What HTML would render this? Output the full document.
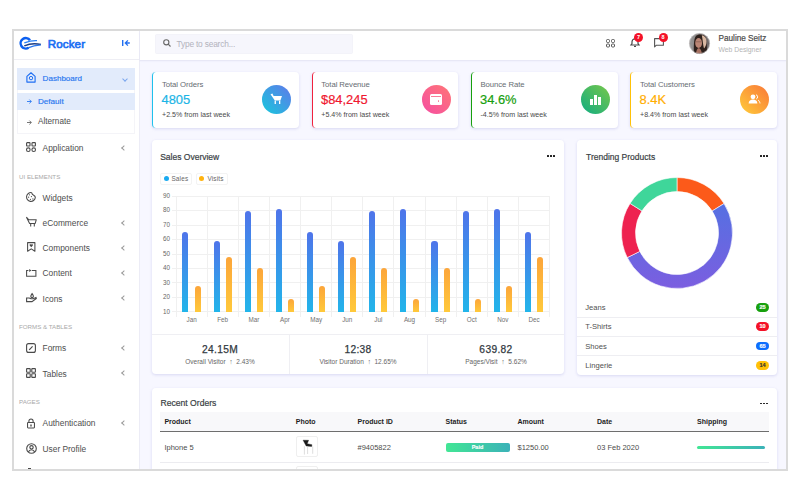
<!DOCTYPE html>
<html><head><meta charset="utf-8">
<style>
*{box-sizing:border-box;margin:0;padding:0}
html,body{width:800px;height:500px;overflow:hidden;background:#fff}
body{position:relative;font-family:"Liberation Sans",sans-serif;color:#4c5258}
.a{position:absolute}
.t{position:absolute;white-space:nowrap;line-height:1}
#frame{left:12px;top:29px;width:776px;height:442px;border:2px solid #dadada}
#main{left:140px;top:60px;width:646px;height:409px;background:#f7f7ff}
#side{left:14px;top:31px;width:126px;height:438px;background:#fff;border-right:1px solid #ececf6}
#sidehead{left:14px;top:31px;width:125px;height:29px;border-bottom:1px solid #eeeef4}
#head{left:140px;top:31px;width:646px;height:29.5px;background:#fff;border-bottom:1px solid #e8e8f6;box-shadow:0 0.5px 1.5px rgba(220,220,245,.6)}
.card{position:absolute;background:#fff;border-radius:4px;box-shadow:0 1px 3px rgba(206,206,238,.75)}
.menu{font-size:8.35px;color:#4e4e4e}
.med{-webkit-text-stroke:0.18px currentColor}
.lbl{font-size:6.2px;color:#a9a9a9;letter-spacing:0}
.chev{position:absolute;left:122px;width:4px;height:4px;border-left:0.9px solid #9a9a9a;border-bottom:0.9px solid #9a9a9a;transform:rotate(45deg)}
svg{position:absolute;overflow:visible}
.stit{font-size:7.75px;letter-spacing:-0.08px;color:#666c72}
.sval{font-size:12.9px;-webkit-text-stroke:0.2px currentColor}
.ssub{font-size:7.1px;color:#4a4a4a}
.ctitle{font-size:8.5px;color:#3a3f45;-webkit-text-stroke:0.2px #3a3f45;letter-spacing:0}
.dots{position:absolute;width:1.9px;height:1.9px;margin:0.1px 0 0 0.2px;background:#222;box-shadow:3px 0 0 #222,6px 0 0 #222;border-radius:0.3px}
.ylab{position:absolute;font-size:6.3px;color:#666;text-align:right;width:20px;line-height:1}
.mlab{position:absolute;font-size:6.3px;color:#707070;text-align:center;width:31px;line-height:1}
.bar{position:absolute;width:6.1px;border-radius:3px 3px 0 0}
.bs{background:linear-gradient(#4f74ea,#22b5ea)}
.bv{background:linear-gradient(#fca53a,#ffc93b)}
.stv{font-size:10.2px;letter-spacing:0.35px;color:#32393f;-webkit-text-stroke:0.25px #32393f;text-align:center;width:138px}
.sts{font-size:6.5px;color:#666;text-align:center;width:138px}
.li{font-size:7.6px;color:#505050;margin-top:0.7px}
.badge{position:absolute;left:756px;width:13px;height:8.5px;border-radius:4.5px;font-size:5.6px;font-weight:bold;color:#fff;text-align:center;line-height:8.5px;-webkit-text-stroke:0.15px currentColor}
.th{font-size:7px;font-weight:bold;color:#1e1e1e}
.td{font-size:7.5px;color:#4c4c4c}
</style></head><body>
<div id="clip" class="a" style="left:0;top:0;width:786px;height:469px;overflow:hidden">
<div id="main" class="a"></div>
<div id="side" class="a"></div>
<div id="sidehead" class="a"></div>
<div id="head" class="a"></div>

<!-- logo -->
<svg style="left:16px;top:33px" width="30" height="20" viewBox="0 0 30 20" fill="none">
  <path d="M14 7.2 A5.2 5.2 0 1 0 12.6 14.7" stroke="#0b5ff0" stroke-width="2.5"/>
  <path d="M8.3 9.9 C12 8.6 16 7.3 21 7.7" stroke="#2a80f5" stroke-width="1.3"/>
  <path d="M8.3 12.9 C12.5 11 17.5 9.6 24.9 11.5" stroke="#1c3d84" stroke-width="1.5"/>
  <path d="M12 14.9 C16 13 20 12.1 24.8 11.9" stroke="#2a78f0" stroke-width="1.2"/>
</svg>
<div class="t" style="left:47.8px;top:38.4px;font-size:11.6px;color:#1b6ef3;-webkit-text-stroke:0.65px #1b6ef3;letter-spacing:0.1px">Rocker</div>
<!-- toggle icon -->
<svg style="left:122px;top:40px" width="9" height="6" viewBox="0 0 9 6">
  <path d="M0.7 0 V6" stroke="#2370f0" stroke-width="1.4"/>
  <path d="M7.8 3 H3.6 M5.9 0.4 L3.3 3 L5.9 5.6" stroke="#2370f0" stroke-width="1.3" fill="none"/>
</svg>

<!-- active menu -->
<div class="a" style="left:17px;top:67.5px;width:118px;height:22px;background:#e2ebfb"></div>
<div class="a" style="left:17px;top:90px;width:118px;height:44px;border:1px solid #f4f4f8;border-top:0"></div>
<div class="a" style="left:17px;top:93px;width:118px;height:17px;background:#e2ebfb"></div>
<svg style="left:26px;top:72.3px" width="10" height="11" viewBox="0 0 10 11">
  <path d="M0.9 4.4 L5 0.8 L9.1 4.4 V10.1 H0.9 Z" fill="none" stroke="#1f6ff3" stroke-width="1.15" stroke-linejoin="round"/>
  <circle cx="5" cy="6.1" r="1.7" fill="none" stroke="#1f6ff3" stroke-width="1"/>
</svg>
<div class="t menu med" style="left:42.6px;top:74.9px;font-size:8.05px;color:#2a78f0">Dashboard</div>
<div class="a" style="left:122.5px;top:77px;width:4px;height:4px;border-right:0.9px solid #7aa6ee;border-bottom:0.9px solid #7aa6ee;transform:rotate(45deg)"></div>
<svg style="left:26.5px;top:99px" width="5" height="5" viewBox="0 0 5 5" fill="none" stroke="#2a78f0" stroke-width="0.9"><path d="M0 2.5 H4.3 M2.4 0.6 L4.3 2.5 L2.4 4.4"/></svg>
<div class="t med" style="left:38px;top:97.8px;font-size:8.1px;color:#2a78f0">Default</div>
<svg style="left:26.5px;top:119.5px" width="5" height="5" viewBox="0 0 5 5" fill="none" stroke="#666" stroke-width="0.9"><path d="M0 2.5 H4.3 M2.4 0.6 L4.3 2.5 L2.4 4.4"/></svg>
<div class="t menu" style="left:38px;top:118.4px;font-size:8.2px">Alternate</div>

<!-- application -->
<svg style="left:26px;top:142px" width="10" height="10" viewBox="0 0 10 10" fill="none" stroke="#4a4a4a" stroke-width="1.1">
  <rect x="0.6" y="0.6" width="3.4" height="3.4" rx="0.6"/><rect x="6" y="0.6" width="3.4" height="3.4" rx="0.6"/>
  <circle cx="2.3" cy="7.7" r="1.8"/><circle cx="7.7" cy="7.7" r="1.8"/>
</svg>
<div class="t menu" style="left:42.6px;top:144.2px">Application</div>
<div class="chev" style="top:145.7px"></div>

<div class="t lbl" style="left:19px;top:173.5px">UI ELEMENTS</div>
<svg style="left:26px;top:192px" width="10" height="10" viewBox="0 0 10 10" fill="none" stroke="#4a4a4a" stroke-width="1.05">
  <path d="M9.3 5.6 A4.4 4.4 0 1 1 5.6 0.65 C5.9 2 6.9 3 8 3.5 C8.7 3.9 9.3 4.6 9.3 5.6Z" stroke-linejoin="round"/>
  <g fill="#4a4a4a" stroke="none"><circle cx="3.5" cy="2.8" r="0.6"/><circle cx="2.6" cy="5.2" r="0.6"/><circle cx="5.4" cy="4.6" r="0.6"/><circle cx="4.4" cy="7.3" r="0.6"/><circle cx="6.9" cy="6.9" r="0.6"/></g>
</svg>
<div class="t menu" style="left:42.6px;top:193.6px">Widgets</div>

<svg style="left:25.5px;top:216.8px" width="11" height="10" viewBox="0 0 11 10" fill="none" stroke="#4a4a4a" stroke-width="1.05">
  <path d="M0.6 0.4 L2.6 2.7 H10.3 L9.2 6.4 H3.6 Z" stroke-linejoin="round"/><path d="M4.7 6.4 V9.6 M8.3 6.4 V9.6"/>
</svg>
<div class="t menu" style="left:42.6px;top:219.0px">eCommerce</div>
<div class="chev" style="top:221px"></div>

<svg style="left:26.8px;top:242.2px" width="8.5" height="10" viewBox="0 0 8.5 10" fill="none" stroke="#4a4a4a" stroke-width="1.05">
  <path d="M0.6 0.6 H7.9 V9.3 L4.25 6.9 L0.6 9.3 Z" stroke-linejoin="round"/><path d="M4.25 5.2 L2.7 3.6 A0.9 0.9 0 0 1 4.25 2.6 A0.9 0.9 0 0 1 5.8 3.6Z" fill="#4a4a4a" stroke="none"/>
</svg>
<div class="t menu" style="left:42.6px;top:244.2px">Components</div>
<div class="chev" style="top:246px"></div>

<svg style="left:26px;top:269px" width="10.5" height="8" viewBox="0 0 10.5 8" fill="none" stroke="#4a4a4a" stroke-width="1.05">
  <path d="M2.4 1.5 H0.6 V7.3 H9.9 V1.5 H5.8"/><path d="M3.2 0 L5.4 1.5 L3.2 3 Z" fill="#4a4a4a" stroke="none"/>
</svg>
<div class="t menu" style="left:42.6px;top:269.4px">Content</div>
<div class="chev" style="top:271px"></div>

<svg style="left:25.5px;top:293px" width="11" height="10" viewBox="0 0 11 10" fill="none" stroke="#4a4a4a" stroke-width="1.1">
  <path d="M6.1 0.6 C5.1 2 4.8 2.8 4.8 3.3 A1.3 1.3 0 0 0 7.4 3.3 C7.4 2.8 7.1 2 6.1 0.6Z"/><path d="M0.6 5 H3.2 L5 5.8 H7.2 L10 4.6 L10.3 5.5 L6 8.6 H0.6Z"/>
</svg>
<div class="t menu" style="left:42.6px;top:294.6px">Icons</div>
<div class="chev" style="top:296px"></div>

<div class="t lbl" style="left:19px;top:323.6px">FORMS &amp; TABLES</div>
<svg style="left:26px;top:343px" width="10" height="10" viewBox="0 0 10 10" fill="none" stroke="#4a4a4a" stroke-width="1.1">
  <rect x="0.6" y="0.6" width="8.8" height="8.8" rx="2"/><path d="M3.2 6.8 L6.6 3.4" stroke-width="1.2"/>
</svg>
<div class="t menu" style="left:42.6px;top:344.4px">Forms</div>
<div class="chev" style="top:346px"></div>

<svg style="left:26px;top:368px" width="10" height="10" viewBox="0 0 10 10" fill="none" stroke="#4a4a4a" stroke-width="1.1">
  <rect x="0.6" y="0.6" width="3.6" height="3.6" rx="0.5"/><rect x="5.8" y="0.6" width="3.6" height="3.6" rx="0.5"/><rect x="0.6" y="5.8" width="3.6" height="3.6" rx="0.5"/><rect x="5.8" y="5.8" width="3.6" height="3.6" rx="0.5"/>
</svg>
<div class="t menu" style="left:42.6px;top:369.6px">Tables</div>
<div class="chev" style="top:371px"></div>

<div class="t lbl" style="left:19px;top:399.2px">PAGES</div>
<svg style="left:27px;top:417.8px" width="8" height="10.5" viewBox="0 0 8 10.5" fill="none" stroke="#4a4a4a" stroke-width="1.05">
  <path d="M1.9 4.4 V3 A2.1 2.1 0 0 1 6.1 3 V4.4"/><rect x="0.55" y="4.4" width="6.9" height="5.5" rx="0.6"/><path d="M4 6.4 V8.6" stroke-width="1.4"/>
</svg>
<div class="t menu" style="left:42.6px;top:419.4px">Authentication</div>
<div class="chev" style="top:421px"></div>

<svg style="left:25.5px;top:443px" width="11" height="11" viewBox="0 0 11 11" fill="none" stroke="#4a4a4a" stroke-width="1.1">
  <circle cx="5.5" cy="5.5" r="4.8"/><circle cx="5.5" cy="4.3" r="1.7"/><path d="M2.4 9 C3 7.4 4 6.8 5.5 6.8 C7 6.8 8 7.4 8.6 9"/>
</svg>
<div class="t menu" style="left:42.6px;top:444.6px">User Profile</div>
<div class="a" style="left:27.6px;top:467.6px;width:3.6px;height:1.4px;background:#4a4a4a"></div>

<!-- header -->
<div class="a" style="left:155px;top:33.6px;width:198px;height:20px;background:#f6f6fc;border:1px solid #f3f3f9;border-radius:1.5px"></div>
<svg style="left:163px;top:39.3px" width="8" height="8" viewBox="0 0 8 8" fill="none" stroke="#666" stroke-width="1.1">
  <circle cx="3.3" cy="3.3" r="2.6"/><path d="M5.2 5.2 L7.5 7.5"/>
</svg>
<div class="t" style="left:176.5px;top:39.9px;font-size:8.4px;letter-spacing:-0.2px;color:#b3b3bd">Type to search...</div>

<svg style="left:605.5px;top:38.8px" width="9" height="8.5" viewBox="0 0 9 8.5" fill="none" stroke="#555" stroke-width="1">
  <rect x="0.5" y="0.5" width="3" height="3" rx="1"/><rect x="5.5" y="0.5" width="3" height="3" rx="1"/><rect x="0.5" y="5" width="3" height="3" rx="1"/><rect x="5.5" y="5" width="3" height="3" rx="1"/>
</svg>
<svg style="left:629.8px;top:38px" width="10" height="9" viewBox="0 0 10 9" fill="none" stroke="#4a4a4a" stroke-width="1.2">
  <path d="M1 7 H9 L8 5.6 V3.8 A3 3 0 0 0 2 3.8 V5.6Z"/><path d="M4 8.3 H6"/>
</svg>
<div class="a" style="left:634px;top:33px;width:9px;height:9px;border-radius:50%;background:#f41127;color:#fff;font-size:5.5px;font-weight:bold;text-align:center;line-height:9px">7</div>
<svg style="left:654px;top:37.6px" width="10" height="10" viewBox="0 0 10 10" fill="none" stroke="#555" stroke-width="1.1">
  <path d="M0.6 0.6 H9.4 V7.2 H2.4 L0.6 8.8Z" stroke-linejoin="round"/>
</svg>
<div class="a" style="left:658.6px;top:33px;width:9px;height:9px;border-radius:50%;background:#f41127;color:#fff;font-size:5.5px;font-weight:bold;text-align:center;line-height:9px">8</div>

<!-- avatar -->
<svg style="left:688.5px;top:33.3px" width="21" height="21" viewBox="0 0 21 21">
  <defs><clipPath id="ac"><circle cx="10.5" cy="10.5" r="10.3"/></clipPath>
  <linearGradient id="abg" x1="0" y1="0" x2="1" y2="0"><stop offset="0" stop-color="#9a9a9a"/><stop offset="1" stop-color="#6a6464"/></linearGradient></defs>
  <g clip-path="url(#ac)">
    <rect width="21" height="21" fill="url(#abg)"/>
    <path d="M5 21 C4.6 14 4.8 6 6.6 3.4 C8.5 1 13.5 0.8 15.8 3 C18 6 17.8 13 18.2 21Z" fill="#2e211c"/>
    <path d="M7 21 C7.2 17.5 8 15.5 9.8 15 C11.6 15.5 12.6 17.5 12.8 21Z" fill="#a87262"/>
    <ellipse cx="9.6" cy="10" rx="3.4" ry="4.9" fill="#bb8675"/>
    <path d="M6.6 8.8 H12.6" stroke="#4a3530" stroke-width="0.5" opacity="0.7"/>
    <path d="M12.8 2.2 C15.5 2.5 17.5 5 17.5 8.5 C17.5 11.5 16.5 14 15 15.5 C14 12 13.8 7 12.8 2.2Z" fill="#d9b8a2"/>
  </g>
  <circle cx="10.5" cy="10.5" r="10.1" fill="none" stroke="#c9c4c4" stroke-width="0.7"/>
</svg>
<div class="t" style="left:718.5px;top:35.2px;font-size:8.2px;color:#4b4b4b;-webkit-text-stroke:0.2px #4b4b4b">Pauline Seitz</div>
<div class="t" style="left:718.5px;top:46.5px;font-size:6.8px;color:#b4b4b4">Web Designer</div>

<!-- stat cards -->
<div class="card" style="left:152px;top:72px;width:147px;height:56px;border-left:1.5px solid #1fc1ec"></div>
<div class="t stit" style="left:162px;top:81.3px">Total Orders</div>
<div class="t sval" style="left:161.5px;top:93.6px;color:#1bb5e6">4805</div>
<div class="t ssub" style="left:162px;top:111.5px">+2.5% from last week</div>
<div class="a" style="left:262px;top:85px;width:29px;height:29px;border-radius:50%;background:linear-gradient(45deg,#17c9dc,#6078ea)"></div>
<svg style="left:270px;top:93px" width="13" height="12" viewBox="0 0 13 12" fill="#fff">
  <path d="M0.5 1.2 L2.4 0.6 L3.6 3 H12 L10.4 7.6 H4.8Z"/><rect x="4.6" y="7.6" width="1.3" height="3.4"/><rect x="9" y="7.6" width="1.3" height="3.4"/>
</svg>

<div class="card" style="left:312px;top:72px;width:146px;height:56px;border-left:1.5px solid #f0223e"></div>
<div class="t stit" style="left:321.3px;top:81.3px">Total Revenue</div>
<div class="t sval" style="left:321px;top:93.6px;color:#f01830">$84,245</div>
<div class="t ssub" style="left:321.3px;top:111.5px">+5.4% from last week</div>
<div class="a" style="left:422px;top:85px;width:29px;height:29px;border-radius:50%;background:linear-gradient(45deg,#f54ea2,#ff7676)"></div>
<div class="a" style="left:430px;top:94px;width:12px;height:11px;border-radius:1.5px;background:#fff"></div>
<div class="a" style="left:431px;top:95.8px;width:10px;height:0.8px;background:#f77f9a"></div>
<div class="a" style="left:437.6px;top:100.2px;width:1.8px;height:1.8px;border-radius:50%;background:#f77f9a"></div>

<div class="card" style="left:471px;top:72px;width:147px;height:56px;border-left:1.5px solid #17a00e"></div>
<div class="t stit" style="left:480.5px;top:81.3px">Bounce Rate</div>
<div class="t sval" style="left:480px;top:93.6px;color:#17a00e">34.6%</div>
<div class="t ssub" style="left:480.5px;top:111.5px">-4.5% from last week</div>
<div class="a" style="left:581px;top:85px;width:29px;height:29px;border-radius:50%;background:linear-gradient(45deg,#10ad82,#78c74a)"></div>
<div class="a" style="left:590px;top:99px;width:2.5px;height:6px;background:#fff"></div>
<div class="a" style="left:594px;top:95px;width:2.5px;height:10px;background:#fff"></div>
<div class="a" style="left:598px;top:97px;width:2.5px;height:8px;background:#fff"></div>

<div class="card" style="left:630px;top:72px;width:147px;height:56px;border-left:1.5px solid #ffc107"></div>
<div class="t stit" style="left:640px;top:81.3px">Total Customers</div>
<div class="t sval" style="left:639.5px;top:93.6px;color:#ffae00">8.4K</div>
<div class="t ssub" style="left:640px;top:111.5px">+8.4% from last week</div>
<div class="a" style="left:740px;top:85px;width:29px;height:29px;border-radius:50%;background:linear-gradient(45deg,#ffcd3a,#f97738)"></div>
<svg style="left:748px;top:94px" width="13" height="10" viewBox="0 0 13 10" fill="#fff">
  <circle cx="5" cy="2.8" r="2.4"/><path d="M0.6 9.4 C0.8 6.8 2.6 5.6 5 5.6 C7.4 5.6 9.2 6.8 9.4 9.4Z"/><path d="M8 0.8 A2.2 2.2 0 0 1 8.2 5 M10 6 C11.2 6.8 11.8 8 12 9.4" fill="none" stroke="#fff" stroke-width="1"/>
</svg>

<!-- sales overview -->
<div class="card" style="left:152px;top:140px;width:412px;height:234px"></div>
<div class="t ctitle" style="left:160.2px;top:152.6px">Sales Overview</div>
<div class="dots" style="left:546.5px;top:155px"></div>
<div class="a" style="left:160px;top:173px;width:31.5px;height:11.5px;border:1px solid #f3f3f3;border-radius:2px"></div>
<div class="a" style="left:163.6px;top:176px;width:5px;height:5px;border-radius:50%;background:#1aaaf0"></div>
<div class="t" style="left:171.4px;top:176.2px;font-size:6.4px;letter-spacing:0.2px;color:#666">Sales</div>
<div class="a" style="left:196px;top:173px;width:31.5px;height:11.5px;border:1px solid #f3f3f3;border-radius:2px"></div>
<div class="a" style="left:199px;top:176px;width:5px;height:5px;border-radius:50%;background:#ffb30f"></div>
<div class="t" style="left:207.4px;top:176.2px;font-size:6.4px;letter-spacing:0.2px;color:#666">Visits</div>
<div class="a" style="left:171.50px;top:311.30px;width:378.10px;height:1px;background:#f0f0f0"></div>
<div class="ylab" style="left:150px;top:308.60px">10</div>
<div class="a" style="left:171.50px;top:296.85px;width:378.10px;height:1px;background:#f0f0f0"></div>
<div class="ylab" style="left:150px;top:294.15px">20</div>
<div class="a" style="left:171.50px;top:282.40px;width:378.10px;height:1px;background:#f0f0f0"></div>
<div class="ylab" style="left:150px;top:279.70px">30</div>
<div class="a" style="left:171.50px;top:267.95px;width:378.10px;height:1px;background:#f0f0f0"></div>
<div class="ylab" style="left:150px;top:265.25px">40</div>
<div class="a" style="left:171.50px;top:253.50px;width:378.10px;height:1px;background:#f0f0f0"></div>
<div class="ylab" style="left:150px;top:250.80px">50</div>
<div class="a" style="left:171.50px;top:239.05px;width:378.10px;height:1px;background:#f0f0f0"></div>
<div class="ylab" style="left:150px;top:236.35px">60</div>
<div class="a" style="left:171.50px;top:224.60px;width:378.10px;height:1px;background:#f0f0f0"></div>
<div class="ylab" style="left:150px;top:221.90px">70</div>
<div class="a" style="left:171.50px;top:210.15px;width:378.10px;height:1px;background:#f0f0f0"></div>
<div class="ylab" style="left:150px;top:207.45px">80</div>
<div class="a" style="left:171.50px;top:195.70px;width:378.10px;height:1px;background:#f0f0f0"></div>
<div class="ylab" style="left:150px;top:193.00px">90</div>
<div class="a" style="left:175.50px;top:195.70px;width:1px;height:121.10px;background:#f0f0f0"></div>
<div class="a" style="left:206.63px;top:195.70px;width:1px;height:121.10px;background:#f0f0f0"></div>
<div class="a" style="left:237.77px;top:195.70px;width:1px;height:121.10px;background:#f0f0f0"></div>
<div class="a" style="left:268.90px;top:195.70px;width:1px;height:121.10px;background:#f0f0f0"></div>
<div class="a" style="left:300.03px;top:195.70px;width:1px;height:121.10px;background:#f0f0f0"></div>
<div class="a" style="left:331.17px;top:195.70px;width:1px;height:121.10px;background:#f0f0f0"></div>
<div class="a" style="left:362.30px;top:195.70px;width:1px;height:121.10px;background:#f0f0f0"></div>
<div class="a" style="left:393.43px;top:195.70px;width:1px;height:121.10px;background:#f0f0f0"></div>
<div class="a" style="left:424.57px;top:195.70px;width:1px;height:121.10px;background:#f0f0f0"></div>
<div class="a" style="left:455.70px;top:195.70px;width:1px;height:121.10px;background:#f0f0f0"></div>
<div class="a" style="left:486.83px;top:195.70px;width:1px;height:121.10px;background:#f0f0f0"></div>
<div class="a" style="left:517.97px;top:195.70px;width:1px;height:121.10px;background:#f0f0f0"></div>
<div class="a" style="left:549.10px;top:195.70px;width:1px;height:121.10px;background:#f0f0f0"></div>
<div class="bar bs" style="left:182.40px;top:232.32px;height:79.48px"></div>
<div class="bar bv" style="left:194.60px;top:285.79px;height:26.01px"></div>
<div class="mlab" style="left:176.07px;top:317px">Jan</div>
<div class="bar bs" style="left:213.53px;top:241.00px;height:70.81px"></div>
<div class="bar bv" style="left:225.73px;top:256.89px;height:54.91px"></div>
<div class="mlab" style="left:207.20px;top:317px">Feb</div>
<div class="bar bs" style="left:244.67px;top:210.65px;height:101.15px"></div>
<div class="bar bv" style="left:256.87px;top:268.45px;height:43.35px"></div>
<div class="mlab" style="left:238.33px;top:317px">Mar</div>
<div class="bar bs" style="left:275.80px;top:209.21px;height:102.59px"></div>
<div class="bar bv" style="left:288.00px;top:298.80px;height:13.00px"></div>
<div class="mlab" style="left:269.47px;top:317px">Apr</div>
<div class="bar bs" style="left:306.93px;top:232.32px;height:79.48px"></div>
<div class="bar bv" style="left:319.13px;top:285.79px;height:26.01px"></div>
<div class="mlab" style="left:300.60px;top:317px">May</div>
<div class="bar bs" style="left:338.07px;top:241.00px;height:70.81px"></div>
<div class="bar bv" style="left:350.27px;top:256.89px;height:54.91px"></div>
<div class="mlab" style="left:331.73px;top:317px">Jun</div>
<div class="bar bs" style="left:369.20px;top:210.65px;height:101.15px"></div>
<div class="bar bv" style="left:381.40px;top:268.45px;height:43.35px"></div>
<div class="mlab" style="left:362.87px;top:317px">Jul</div>
<div class="bar bs" style="left:400.33px;top:209.21px;height:102.59px"></div>
<div class="bar bv" style="left:412.53px;top:298.80px;height:13.00px"></div>
<div class="mlab" style="left:394.00px;top:317px">Aug</div>
<div class="bar bs" style="left:431.47px;top:241.00px;height:70.81px"></div>
<div class="bar bv" style="left:443.67px;top:268.45px;height:43.35px"></div>
<div class="mlab" style="left:425.13px;top:317px">Sep</div>
<div class="bar bs" style="left:462.60px;top:210.65px;height:101.15px"></div>
<div class="bar bv" style="left:474.80px;top:298.80px;height:13.00px"></div>
<div class="mlab" style="left:456.27px;top:317px">Oct</div>
<div class="bar bs" style="left:493.73px;top:209.21px;height:102.59px"></div>
<div class="bar bv" style="left:505.93px;top:285.79px;height:26.01px"></div>
<div class="mlab" style="left:487.40px;top:317px">Nov</div>
<div class="bar bs" style="left:524.87px;top:232.32px;height:79.48px"></div>
<div class="bar bv" style="left:537.07px;top:256.89px;height:54.91px"></div>
<div class="mlab" style="left:518.53px;top:317px">Dec</div>

<!-- stats row -->
<div class="a" style="left:152px;top:334px;width:412px;height:1px;background:#efeff3"></div>
<div class="a" style="left:288.6px;top:335px;width:1px;height:39px;background:#efeff3"></div>
<div class="a" style="left:426.6px;top:335px;width:1px;height:39px;background:#efeff3"></div>
<div class="t stv" style="left:151px;top:345px">24.15M</div>
<div class="t sts" style="left:151px;top:357.9px">Overall Visitor &nbsp;<b style="font-size:7px">&#8593;</b>&nbsp; 2.43%</div>
<div class="t stv" style="left:289px;top:345px">12:38</div>
<div class="t sts" style="left:289px;top:357.9px">Visitor Duration &nbsp;<b style="font-size:7px">&#8593;</b>&nbsp; 12.65%</div>
<div class="t stv" style="left:427px;top:345px">639.82</div>
<div class="t sts" style="left:427px;top:357.9px">Pages/Visit &nbsp;<b style="font-size:7px">&#8593;</b>&nbsp; 5.62%</div>

<!-- trending -->
<div class="card" style="left:577px;top:140px;width:200px;height:235px"></div>
<div class="t ctitle" style="left:586px;top:152.6px">Trending Products</div>
<div class="dots" style="left:759.5px;top:155px"></div>
<svg style="left:621px;top:177px" width="112" height="112" viewBox="-56 -56 112 112">
  <defs>
    <linearGradient id="gb" x1="0" y1="0" x2="0" y2="1"><stop offset="0" stop-color="#5570e2"/><stop offset="1" stop-color="#7b5ee0"/></linearGradient>
  </defs>
  <g><path d="M0.00 -55.50 A55.5 55.5 0 0 1 47.07 -29.41 L35.19 -21.99 A41.5 41.5 0 0 0 0.00 -41.50Z" fill="#fc5a1a" stroke="#fff" stroke-width="0.6"/><path d="M47.07 -29.41 A55.5 55.5 0 1 1 -49.75 24.59 L-37.20 18.39 A41.5 41.5 0 1 0 35.19 -21.99Z" fill="url(#gb)" stroke="#fff" stroke-width="0.6"/><path d="M-49.75 24.59 A55.5 55.5 0 0 1 -46.96 -29.57 L-35.12 -22.11 A41.5 41.5 0 0 0 -37.20 18.39Z" fill="#ee2250" stroke="#fff" stroke-width="0.6"/><path d="M-46.96 -29.57 A55.5 55.5 0 0 1 -0.00 -55.50 L-0.00 -41.50 A41.5 41.5 0 0 0 -35.12 -22.11Z" fill="#3fd69a" stroke="#fff" stroke-width="0.6"/></g>
</svg>
<div class="a" style="left:577px;top:316.5px;width:200px;height:1px;background:#eeeef2"></div>
<div class="a" style="left:577px;top:336px;width:200px;height:1px;background:#eeeef2"></div>
<div class="a" style="left:577px;top:355px;width:200px;height:1px;background:#eeeef2"></div>
<div class="t li" style="left:585.3px;top:303.3px">Jeans</div>
<div class="t li" style="left:585.3px;top:322.6px">T-Shirts</div>
<div class="t li" style="left:585.3px;top:342px">Shoes</div>
<div class="t li" style="left:585.3px;top:361.2px">Lingerie</div>
<div class="badge" style="top:303px;background:#17a00e">25</div>
<div class="badge" style="top:322.3px;background:#f41127">10</div>
<div class="badge" style="top:341.6px;background:#0d6efd">65</div>
<div class="badge" style="top:361px;background:#ffc107;color:#333">14</div>

<!-- recent orders -->
<div class="card" style="left:152px;top:388px;width:625px;height:100px"></div>
<div class="t ctitle" style="left:160.5px;top:399.4px;font-size:8.6px">Recent Orders</div>
<div class="dots" style="left:759.5px;top:402.5px"></div>
<div class="a" style="left:160px;top:412px;width:609px;height:19px;background:#f8f8fa"></div>
<div class="a" style="left:160px;top:430.5px;width:609px;height:1.4px;background:#6e6e6e"></div>
<div class="t th" style="left:164.4px;top:418.4px">Product</div>
<div class="t th" style="left:295.8px;top:418.4px">Photo</div>
<div class="t th" style="left:357.5px;top:418.4px">Product ID</div>
<div class="t th" style="left:445.5px;top:418.4px">Status</div>
<div class="t th" style="left:517.5px;top:418.4px">Amount</div>
<div class="t th" style="left:597px;top:418.4px">Date</div>
<div class="t th" style="left:697px;top:418.4px">Shipping</div>
<div class="t td" style="left:164.4px;top:443.5px">Iphone 5</div>
<div class="a" style="left:296.3px;top:435.8px;width:22px;height:21.5px;border:1px solid #efefef;border-radius:2px;background:#fff"></div>
<svg style="left:302px;top:439px" width="12" height="17" viewBox="0 0 12 17">
  <path d="M1.1 1.2 L6.6 1.3 L5.2 4.7 L9.9 5.7 L9.7 7.4 L4.2 7 Z" fill="#1a1a1a" stroke="#1a1a1a" stroke-width="0.4" stroke-linejoin="round"/>
  <path d="M2.4 7.2 V15.6 M5.6 7.4 V15 M10.7 7.4 V14.8" stroke="#d0d0d0" stroke-width="0.7"/>
</svg>
<div class="t td" style="left:357.5px;top:443.5px">#9405822</div>
<div class="a" style="left:445.5px;top:443px;width:64px;height:9px;border-radius:2px;background:linear-gradient(to right,#42e695,#3bb2b8);color:#fff;font-size:5.5px;font-weight:bold;text-align:center;line-height:9px;-webkit-text-stroke:0.15px #fff">Paid</div>
<div class="t td" style="left:517.5px;top:443.5px">$1250.00</div>
<div class="t td" style="left:597px;top:443.5px">03 Feb 2020</div>
<div class="a" style="left:697px;top:445.5px;width:68px;height:3px;border-radius:1.5px;background:linear-gradient(to right,#42e695,#3bb2b8)"></div>
<div class="a" style="left:160px;top:462px;width:609px;height:1px;background:#ececf0"></div>
<div class="a" style="left:296.3px;top:466px;width:22px;height:10px;border:1px solid #efefef;border-radius:2px"></div>

</div>
<div id="frame" class="a"></div>
</body></html>
